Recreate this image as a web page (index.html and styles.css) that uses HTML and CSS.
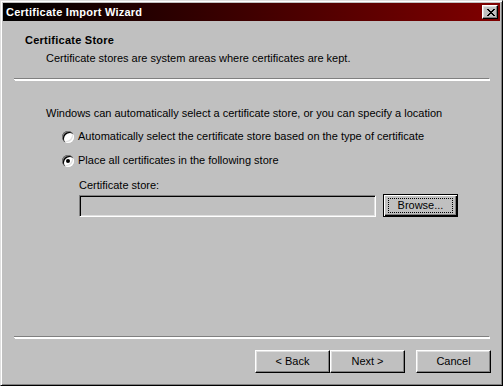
FILE: index.html
```html
<!DOCTYPE html>
<html>
<head>
<meta charset="utf-8">
<link rel="stylesheet" href="styles.css">
</head>
<body>
<div class="window">
  <div class="titlebar">
    <span class="title">Certificate Import Wizard</span>
    <button class="close" type="button">
      <svg width="8" height="7" viewBox="0 0 8 7"><path d="M0 0h2v1h1v1h2v-1h1v-1h2v1h-1v1h-1v1h-1v1h1v1h1v1h1v1h-2v-1h-1v-1h-2v1h-1v1h-2v-1h1v-1h1v-1h1v-1h-1v-1h-1v-1h-1z" fill="#000"/></svg>
    </button>
  </div>
  <div class="header">
    <div class="heading">Certificate Store</div>
    <div class="subheading">Certificate stores are system areas where certificates are kept.</div>
  </div>
  <div class="etched"></div>
  <div class="body">
    <div class="intro">Windows can automatically select a certificate store, or you can specify a location</div>
    <div class="radio-row">
      <span class="radio"></span>
      <span class="label">Automatically select the certificate store based on the type of certificate</span>
    </div>
    <div class="radio-row second">
      <span class="radio checked"></span>
      <span class="label">Place all certificates in the following store</span>
    </div>
    <div class="store">
      <div class="store-label">Certificate store:</div>
      <div class="store-row">
        <div class="field"></div>
        <button class="btn default" type="button"><span class="focus">Browse...</span></button>
      </div>
    </div>
  </div>
  <div class="etched"></div>
  <div class="footer">
    <button class="btn" type="button">&lt; Back</button>
    <button class="btn" type="button">Next &gt;</button>
    <button class="btn cancel" type="button">Cancel</button>
  </div>
</div>
</body>
</html>
```
FILE: styles.css
```css
html, body {
  margin: 0;
  padding: 0;
  background: #c0c0c0;
}
body {
  font-family: "Liberation Sans", Arial, sans-serif;
  font-size: 11px;
  line-height: 13px;
  color: #000;
}
.window {
  width: 503px;
  height: 386px;
  box-sizing: border-box;
  border: 1px solid;
  border-color: #dfdfdf #000 #000 #dfdfdf;
  box-shadow: inset 1px 1px 0 #fff, inset -1px -1px 0 #808080;
  padding: 2px;
  display: flex;
  flex-direction: column;
  background: #c0c0c0;
}
.titlebar {
  height: 18px;
  background: linear-gradient(to right, #000000, #800000);
  display: flex;
  align-items: center;
  padding-left: 3px;
  padding-right: 2px;
}
.title {
  flex: 1;
  color: #fff;
  font-weight: bold;
  letter-spacing: 0.25px;
}
.close {
  width: 16px;
  height: 14px;
  padding: 0;
  margin: 0;
  border: 1px solid;
  border-color: #fff #000 #000 #fff;
  box-shadow: inset -1px -1px 0 #808080, inset 1px 1px 0 #dfdfdf;
  background: #c0c0c0;
  display: flex;
  align-items: center;
  justify-content: center;
  box-sizing: border-box;
  padding-left: 1px;
}
.close svg { display: block; }
.header {
  padding-top: 13px;
  padding-left: 22px;
}
.heading {
  font-weight: bold;
  letter-spacing: 0.25px;
}
.subheading {
  margin-top: 5px;
  padding-left: 21px;
}
.etched {
  margin-top: 13px;
  margin-left: 11px;
  width: 475px;
  height: 1px;
  background: #808080;
  border-bottom: 1px solid #fff;
  box-shadow: 1px 1px 0 #fff;
}
.body {
  flex: 1;
  padding-left: 43px;
  padding-top: 27px;
}
.intro {
  height: 13px;
}
.radio-row {
  display: flex;
  align-items: center;
  margin-top: 10px;
  padding-left: 16px;
  height: 13px;
}
.radio-row.second {
  margin-top: 11px;
}
.radio {
  width: 12px;
  height: 12px;
  box-sizing: border-box;
  border-radius: 50%;
  margin-right: 4px;
  background: #fff;
  position: relative;
  box-shadow:
    inset 1px 1px 0 #808080,
    inset 2px 2px 0 #000,
    inset -1px -1px 0 #fff,
    inset -2px -2px 0 #dfdfdf;
  flex: none;
}
.radio.checked::after {
  content: "";
  position: absolute;
  left: 4px;
  top: 4px;
  width: 4px;
  height: 4px;
  border-radius: 50%;
  background: #000;
}
.store {
  margin-top: 12px;
  padding-left: 33px;
}
.store-label {
  height: 13px;
}
.store-row {
  display: flex;
  align-items: flex-end;
  margin-top: 2px;
}
.field {
  width: 297px;
  height: 22px;
  box-sizing: border-box;
  border: 1px solid;
  border-color: #808080 #fff #fff #808080;
  box-shadow: inset 1px 1px 0 #000, inset -1px -1px 0 #dfdfdf;
  background: #c0c0c0;
  margin-bottom: 0;
}
.btn {
  width: 75px;
  height: 23px;
  box-sizing: border-box;
  font-family: "Liberation Sans", Arial, sans-serif;
  font-size: 11px;
  line-height: 13px;
  color: #000;
  background: #c0c0c0;
  border: 1px solid;
  border-color: #fff #000 #000 #fff;
  box-shadow: inset -1px -1px 0 #808080, inset 1px 1px 0 #dfdfdf;
  padding: 0;
  margin: 0;
  display: flex;
  align-items: center;
  justify-content: center;
}
.btn.default {
  margin-left: 7px;
  margin-bottom: 0;
  border-color: #000;
  box-shadow: inset 1px 1px 0 #fff, inset -1px -1px 0 #000, inset -2px -2px 0 #808080;
  position: relative;
}
.focus {
  display: block;
  width: 65px;
  height: 15px;
  line-height: 13px;
  box-sizing: border-box;
  border: 1px dotted #000;
  text-align: center;
}
.footer {
  height: 45px;
  display: flex;
  padding-left: 252px;
  padding-top: 12px;
  box-sizing: border-box;
}
.cancel {
  margin-left: 11px;
}
```
